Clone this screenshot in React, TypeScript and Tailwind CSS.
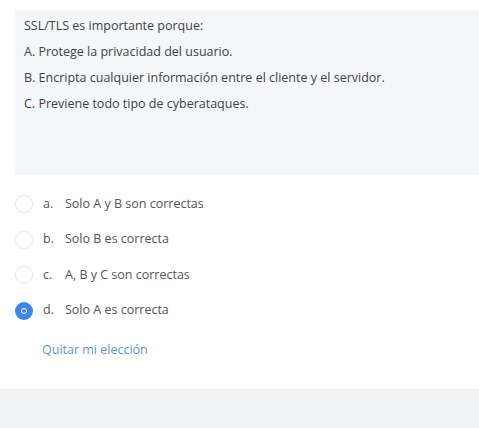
export default function App() {
  const options = [
    { key: "a", text: "Solo A y B son correctas", checked: false },
    { key: "b", text: "Solo B es correcta", checked: false },
    { key: "c", text: "A, B y C son correctas", checked: false },
    { key: "d", text: "Solo A es correcta", checked: true },
  ];

  return (
    <div className="h-[428px] w-[479px] overflow-hidden bg-white font-['Open_Sans',sans-serif] text-[12.5px] text-[#3f4244]">
      <div className="pt-[10px] pl-[15px]">
        <div className="h-[165px] bg-[#f4f7fa] px-[9px] pt-[3px]">
          <p className="leading-[26px]">SSL/TLS es importante porque:</p>
          <p className="leading-[26px]">A. Protege la privacidad del usuario.</p>
          <p className="leading-[26px]">B. Encripta cualquier información entre el cliente y el servidor.</p>
          <p className="leading-[26px]">C. Previene todo tipo de cyberataques.</p>
        </div>
      </div>

      <div className="mt-[20px] flex flex-col gap-[17.5px] pl-[15px]">
        {options.map((o) => (
          <div key={o.key} className="flex h-[18px] items-center">
            {o.checked ? (
              <span className="flex h-[18px] w-[18px] items-center justify-center rounded-full bg-[#3d85e9]">
                <span className="h-[6px] w-[6px] rounded-full border-[1.5px] border-white" />
              </span>
            ) : (
              <span className="h-[18px] w-[18px] rounded-full border border-[#e2e4e6] bg-white" />
            )}
            <span className="ml-[10px] w-[22px] text-[#555]">{o.key}.</span>
            <span className="text-[#555]">{o.text}</span>
          </div>
        ))}
      </div>

      <div className="mt-[21px] pl-[42px] text-[#5b94dd]">Quitar mi elección</div>

      <div className="mt-[30px] h-[40px] bg-[#f0f2f3]" />
    </div>
  );
}
